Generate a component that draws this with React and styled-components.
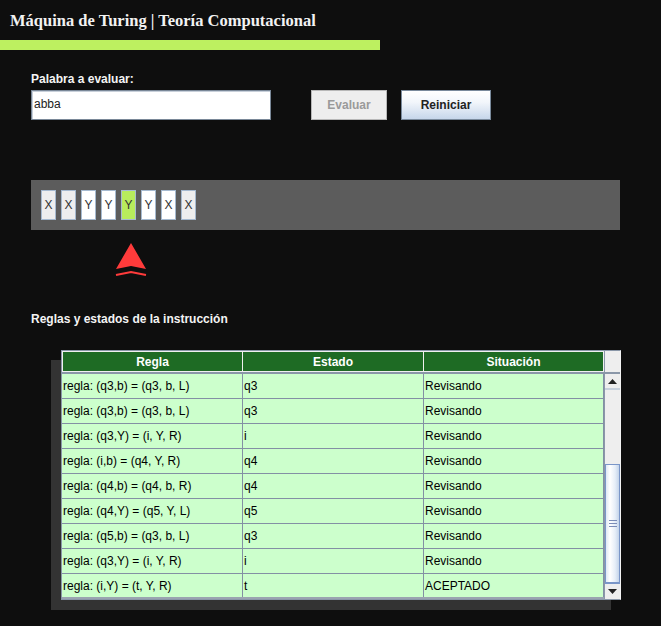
import React from "react";
import styled, { createGlobalStyle } from "styled-components";

const GlobalStyle = createGlobalStyle`
  html, body {
    margin: 0;
    padding: 0;
    background: #0e0e0e;
  }
  body {
    font-family: "Liberation Sans", Arial, sans-serif;
  }
`;

const Page = styled.div`
  width: 661px;
  height: 626px;
  overflow: hidden;
  background: #0e0e0e;
`;

const Title = styled.h1`
  margin: 0;
  padding: 11px 0 0 10px;
  font-family: "Liberation Serif", "Times New Roman", serif;
  font-size: 16.5px;
  line-height: 20px;
  font-weight: bold;
  color: #f2f2f2;
`;

const AccentBar = styled.div`
  width: 380px;
  height: 10px;
  margin-top: 9px;
  background: #bdf060;
`;

const Section = styled.section`
  padding-left: 31px;
`;

const Label = styled.div`
  margin-top: ${(p) => p.$top}px;
  font-size: 12px;
  line-height: 14px;
  font-weight: bold;
  color: #f4f4f4;
`;

const Controls = styled.div`
  display: flex;
  align-items: center;
  margin-top: 4px;
  height: 30px;
`;

const WordInput = styled.div`
  box-sizing: border-box;
  width: 240px;
  height: 30px;
  background: #fff;
  border: 1px solid #7a8898;
  box-shadow: inset 1px 1px 0 #c8d0da;
  padding: 6px 0 0 2px;
  font-size: 12px;
  color: #222;
`;

const Button = styled.div`
  box-sizing: border-box;
  height: 30px;
  width: ${(p) => p.$w}px;
  margin-left: ${(p) => p.$ml}px;
  display: flex;
  align-items: center;
  justify-content: center;
  font-size: 12px;
  font-weight: bold;
  border: 1px solid ${(p) => (p.$disabled ? "#b8b8b8" : "#7a8a9c")};
  color: ${(p) => (p.$disabled ? "#9a9a9a" : "#222")};
  background: ${(p) =>
    p.$disabled ? "#eeeeee" : "linear-gradient(#ffffff 0%, #f2f6fb 40%, #c6d6ea 100%)"};
`;

const Tape = styled.div`
  box-sizing: border-box;
  width: 589px;
  height: 50px;
  margin-top: 60px;
  padding: 10px 0 0 10px;
  background: #5c5c5c;
  display: flex;
  gap: 5px;
`;

const Cell = styled.div`
  box-sizing: border-box;
  width: 15px;
  height: 30px;
  border: 1px solid #a6bad0;
  background: ${(p) => p.$bg};
  display: flex;
  align-items: center;
  justify-content: center;
  font-size: 12px;
  color: #333;
`;

const Head = styled.div`
  margin: 12px 0 0 84px;
  height: 36px;
`;

const TableWrap = styled.div`
  margin: 24px 0 0 30px;
  width: 560px;
  box-shadow: -10px 10px 0 #333333;
`;

const Frame = styled.div`
  box-sizing: border-box;
  width: 560px;
  border: 1px solid #8a97a8;
  border-right-color: #f4f4f4;
  background: #eeeeee;
`;

const HeaderRow = styled.div`
  display: grid;
  grid-template-columns: 181px 181px 180px 16px;
  height: 21px;
  border-bottom: 2px solid #8a97a8;
`;

const HeaderCell = styled.div`
  box-sizing: border-box;
  background: #1e6b24;
  border: 1px solid #f0f0f0;
  border-left-width: ${(p) => (p.$first ? 1 : 0)}px;
  color: #fff;
  font-size: 12px;
  font-weight: bold;
  display: flex;
  align-items: center;
  justify-content: center;
`;

const Corner = styled.div`
  background: #eeeeee;
  border-left: 1px solid #8a97a8;
`;

const Body = styled.div`
  display: flex;
`;

const Rows = styled.div`
  width: 542px;
`;

const Row = styled.div`
  display: grid;
  grid-template-columns: 181px 181px 180px;
  height: 25px;
  box-sizing: border-box;
  border-bottom: 1px solid #8390a4;
  &:last-child {
    border-bottom: 2px solid #9aa4b0;
  }
`;

const DataCell = styled.div`
  box-sizing: border-box;
  background: #ccffcc;
  border-right: 1px solid #8390a4;
  padding-left: 1px;
  display: flex;
  align-items: center;
  font-size: 12px;
  color: #000;
`;

const Scrollbar = styled.div`
  width: 16px;
  display: flex;
  flex-direction: column;
  border-left: 1px solid #8a97a8;
  background: #eeeeee;
`;

const ArrowButton = styled.div`
  box-sizing: border-box;
  height: 16px;
  display: flex;
  align-items: center;
  justify-content: center;
  background: #eeeeee;
  border-top: ${(p) => (p.$down ? "1px solid #7a96c8" : "0")};
  border-bottom: ${(p) => (p.$down ? "0" : "2px solid #c6d0dc")};
`;

const Track = styled.div`
  flex: 1;
  display: flex;
  flex-direction: column;
  justify-content: flex-end;
`;

const Thumb = styled.div`
  box-sizing: border-box;
  height: 119px;
  border: 1px solid #7a96c8;
  background: linear-gradient(90deg, #dfe8f4 0%, #ffffff 30%, #e6eef8 70%, #c4d4ea 100%);
  display: flex;
  align-items: center;
  justify-content: center;
`;

const Grip = styled.div`
  width: 8px;
  height: 5px;
  border-top: 1px solid #7a8cb8;
  border-bottom: 1px solid #7a8cb8;
  position: relative;
  &::after {
    content: "";
    position: absolute;
    left: 0;
    right: 0;
    top: 2px;
    border-top: 1px solid #7a8cb8;
  }
`;

const Triangle = ({ down }) => (
  <svg width="9" height="5" viewBox="0 0 9 5">
    <path d={down ? "M0 0 L9 0 L4.5 5 Z" : "M4.5 0 L9 5 L0 5 Z"} fill="#222" />
  </svg>
);

const tape = [
  { s: "X", bg: "#eeeeee" },
  { s: "X", bg: "#eeeeee" },
  { s: "Y", bg: "#ffffff" },
  { s: "Y", bg: "#ffffff" },
  { s: "Y", bg: "#b8ec5c" },
  { s: "Y", bg: "#ffffff" },
  { s: "X", bg: "#ffffff" },
  { s: "X", bg: "#eeeeee" },
];

const rules = [
  ["regla: (q3,b) = (q3, b, L)", "q3", "Revisando"],
  ["regla: (q3,b) = (q3, b, L)", "q3", "Revisando"],
  ["regla: (q3,Y) = (i, Y, R)", "i", "Revisando"],
  ["regla: (i,b) = (q4, Y, R)", "q4", "Revisando"],
  ["regla: (q4,b) = (q4, b, R)", "q4", "Revisando"],
  ["regla: (q4,Y) = (q5, Y, L)", "q5", "Revisando"],
  ["regla: (q5,b) = (q3, b, L)", "q3", "Revisando"],
  ["regla: (q3,Y) = (i, Y, R)", "i", "Revisando"],
  ["regla: (i,Y) = (t, Y, R)", "t", "ACEPTADO"],
];

const App = () => (
  <Page>
    <GlobalStyle />
    <Title>Máquina de Turing | Teoría Computacional</Title>
    <AccentBar />
    <Section>
      <Label $top={22}>Palabra a evaluar:</Label>
      <Controls>
        <WordInput>abba</WordInput>
        <Button $w={76} $ml={40} $disabled>
          Evaluar
        </Button>
        <Button $w={90} $ml={14}>
          Reiniciar
        </Button>
      </Controls>
      <Tape>
        {tape.map((c, i) => (
          <Cell key={i} $bg={c.bg}>
            {c.s}
          </Cell>
        ))}
      </Tape>
      <Head>
        <svg width="32" height="36" viewBox="0 0 32 36">
          <path d="M16 1 L31 27 L16 24 L1 27 Z" fill="#ff3b3b" />
          <path d="M1 33 L16 30 L31 33" stroke="#ff3b3b" strokeWidth="2.2" fill="none" />
        </svg>
      </Head>
      <Label $top={34}>Reglas y estados de la instrucción</Label>
      <TableWrap>
        <Frame>
          <HeaderRow>
            <HeaderCell $first>Regla</HeaderCell>
            <HeaderCell>Estado</HeaderCell>
            <HeaderCell>Situación</HeaderCell>
            <Corner />
          </HeaderRow>
          <Body>
            <Rows>
              {rules.map((r, i) => (
                <Row key={i}>
                  {r.map((t, j) => (
                    <DataCell key={j}>{t}</DataCell>
                  ))}
                </Row>
              ))}
            </Rows>
            <Scrollbar>
              <ArrowButton>
                <Triangle />
              </ArrowButton>
              <Track>
                <Thumb>
                  <Grip />
                </Thumb>
              </Track>
              <ArrowButton $down>
                <Triangle down />
              </ArrowButton>
            </Scrollbar>
          </Body>
        </Frame>
      </TableWrap>
    </Section>
  </Page>
);

export default App;
